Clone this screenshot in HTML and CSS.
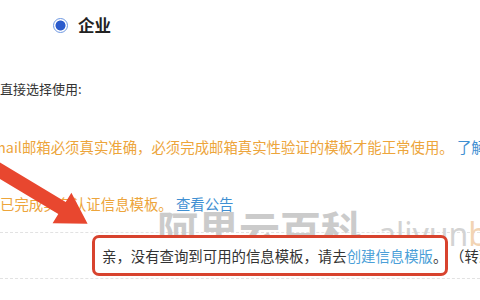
FILE: index.html
```html
<!DOCTYPE html>
<html lang="zh-CN">
<head>
    <meta charset="UTF-8">
    <meta name="viewport" content="width=device-width, initial-scale=1.0">
    <title>信息模板</title>
    <link rel="stylesheet" href="styles.css">
</head>
<body>
    <div class="page">
        <div class="radio-row">
            <span class="radio"></span>
            <span class="radio-label">企业</span>
        </div>

        <div class="hint">直接选择使用:</div>

        <div class="notice notice-email">Email邮箱必须真实准确，必须完成邮箱真实性验证的模板才能正常使用。 <a class="link" href="#">了解更多</a></div>

        <div class="notice">已完成实名认证信息模板。 <a class="link" href="#">查看公告</a></div>

        <div class="template-list">
            <div class="empty-row">
                <div class="empty-box">亲，没有查询到可用的信息模板，请去<a class="link" href="#">创建信息模版</a>。</div>
                <span class="empty-after">（转到</span>
            </div>
        </div>

        <!-- watermark sits behind the highlighted box -->
        <div class="watermark"><b>阿里云百科</b><span class="wm-latin">aliyun<em>baike</em></span></div>

        <!-- red annotation arrow -->
        <svg class="arrow" width="480" height="300" viewBox="0 0 480 300">
            <polygon points="-13.3,154.5 65.7,202 71.4,192.7 87.6,223.7 52.6,223.3 58.3,214 -20.7,166.5" fill="#e8472f"/>
        </svg>
    </div>
</body>
</html>
```

FILE: styles.css
```css
body {
    margin: 0;
    background-color: #fff;
    font-family: "Noto Sans CJK SC", "Noto Sans", sans-serif;
    color: #333;
    overflow: hidden;
}

.page {
    position: relative;
    width: 480px;
    height: 300px;
    overflow: hidden;
}

.radio-row {
    display: flex;
    align-items: center;
    gap: 10px;
    height: 50px;
    padding-left: 53px;
}

.radio {
    width: 13px;
    height: 13px;
    border: 1.5px solid #6e98e2;
    border-radius: 50%;
    background: radial-gradient(circle, #2b5bcc 0, #2b5bcc 4.6px, #fff 5.4px);
}

.radio-label {
    font-size: 16.5px;
    font-weight: 700;
    color: #222;
}

.hint {
    margin-top: 28px;
    font-size: 13px;
    line-height: 22px;
    white-space: nowrap;
}

.notice {
    margin-top: 35px;
    font-size: 14.4px;
    line-height: 22px;
    color: #eda53b;
    white-space: nowrap;
}

.notice-email {
    margin-top: 36px;
    margin-left: -16px;
}

.link {
    color: #3f8fd2;
    text-decoration: none;
}

.template-list {
    margin-top: 17px;
    border-top: 1px dashed #e2e2e2;
    border-bottom: 1px dashed #e2e2e2;
    padding: 2px 0 2px 92px;
}

.empty-row {
    display: flex;
    align-items: center;
    gap: 2px;
    white-space: nowrap;
}

.empty-box {
    position: relative;
    z-index: 2;
    flex: none;
    width: 343px;
    height: 35px;
    padding: 0 0 0 7px;
    border: 3px solid #d8432e;
    border-radius: 7px;
    background-color: #fff;
    font-size: 14.4px;
    line-height: 35px;
}

.empty-box .link {
    color: #4b9fd8;
}

.empty-after {
    font-size: 14.4px;
}

.watermark {
    position: absolute;
    left: 157px;
    top: 208px;
    z-index: 1;
    display: flex;
    align-items: baseline;
    gap: 16px;
    white-space: nowrap;
    color: #cbcbcb;
    line-height: 1;
}

.watermark b {
    font-size: 41px;
    font-weight: 700;
}

.wm-latin {
    font-family: "Noto Sans", sans-serif;
    font-size: 32px;
    color: #d3d3d3;
}

.wm-latin em {
    font-style: normal;
    color: #f2d4b4;
}

.arrow {
    position: absolute;
    left: 0;
    top: 0;
    z-index: 3;
    overflow: visible;
    pointer-events: none;
}
```
